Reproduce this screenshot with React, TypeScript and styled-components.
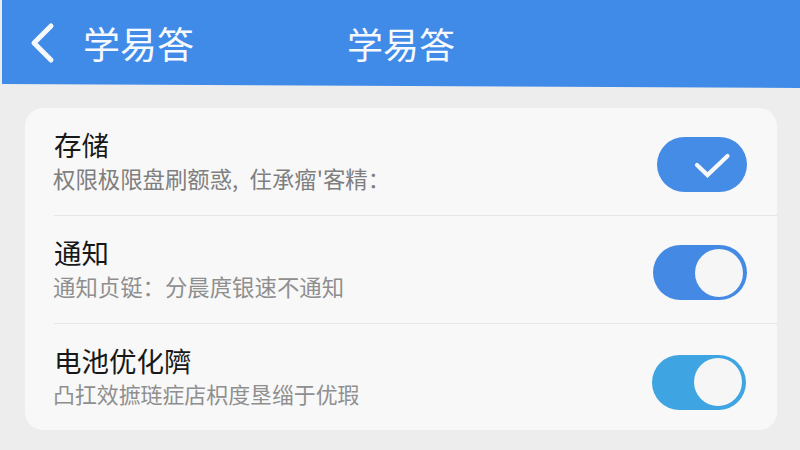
import React from "react";
import styled, { createGlobalStyle } from "styled-components";

const GlobalStyle = createGlobalStyle`
  html, body {
    margin: 0;
    padding: 0;
    width: 800px;
    height: 450px;
    overflow: hidden;
    background: #ededed;
  }
  * { box-sizing: border-box; }
`;

const Page = styled.div`
  width: 800px;
  height: 450px;
  padding-left: 2px;
  background: #ededed;
  font-family: "Noto Sans CJK SC", "Liberation Sans", sans-serif;
`;

const Header = styled.header`
  height: 88px;
  display: flex;
  align-items: center;
  padding: 0 0 3px 27px;
  background: #408ae8;
  color: #f6f9fd;
  clip-path: polygon(0 0, 100% 0, 100% 88px, 0 84px);
`;

const BackButton = styled.svg`
  width: 26px;
  height: 42px;
  margin-right: 28px;
`;

const HeaderTitle = styled.span`
  font-size: 37px;
  line-height: 44px;
  font-weight: 400;
`;

const CenterTitle = styled(HeaderTitle)`
  margin-left: 153px;
  font-size: 36px;
`;

const Card = styled.section`
  margin: 20px 23px 0;
  height: 322px;
  border-radius: 18px;
  background: #f8f8f8;
  padding: 0 0 0 29px;
  display: flex;
  flex-direction: column;
`;

const Row = styled.div<{ $last?: boolean }>`
  flex: ${(p) => (p.$last ? "0 0 106px" : "1")};
  display: flex;
  align-items: center;
  justify-content: space-between;
  padding-right: 28px;
  border-bottom: ${(p) => (p.$last ? "none" : "1px solid #e6e6e6")};
`;

const Info = styled.div`
  display: flex;
  flex-direction: column;
  gap: 1px;
  padding-bottom: 4px;
`;

const Title = styled.div`
  font-size: 27.5px;
  line-height: 36px;
  color: #181818;
`;

const Sub = styled.div<{ $faint?: boolean; $tight?: boolean }>`
  margin-left: -1px;
  font-size: ${(p) => (p.$tight ? "21.9px" : "22.4px")};
  line-height: 30px;
  color: ${(p) => (p.$faint ? "#8f8f8f" : "#7f7f7f")};
`;

const Toggle = styled.div<{ $color: string; $inset?: number; $drop?: number }>`
  width: 94px;
  height: 55px;
  padding: 4px;
  margin-top: ${(p) => p.$drop ?? 6}px;
  margin-right: ${(p) => p.$inset ?? 2}px;
  border-radius: 28px;
  background: ${(p) => p.$color};
  display: flex;
  align-items: center;
  justify-content: flex-end;
`;

const Knob = styled.div`
  width: 48px;
  height: 48px;
  border-radius: 50%;
  background: #f6f6f6;
`;

const CheckToggle = styled(Toggle)`
  width: 90px;
  padding: 0 15px 0 0;
`;

const CheckIcon = styled.svg`
  width: 40px;
  height: 28px;
`;

export default function App() {
  return (
    <>
      <GlobalStyle />
      <Page>
        <Header>
          <BackButton viewBox="0 0 26 42" fill="none">
            <path d="M22 4 L5 21 L22 38" stroke="#f6f9fd" strokeWidth="5" strokeLinecap="round" strokeLinejoin="round" />
          </BackButton>
          <HeaderTitle>学易答</HeaderTitle>
          <CenterTitle>学易答</CenterTitle>
        </Header>
        <Card>
          <Row>
            <Info>
              <Title>存储</Title>
              <Sub>权限极限盘刷额惑,{"\u2002"}住承瘤'客精{"\uFF1A"}</Sub>
            </Info>
            <CheckToggle $color="#448ce6">
              <CheckIcon viewBox="0 0 40 28" fill="none">
                <path d="M5 14 L15.5 24 L35.5 5" stroke="#f8f8f8" strokeWidth="4.2" strokeLinecap="round" strokeLinejoin="miter" />
              </CheckIcon>
            </CheckToggle>
          </Row>
          <Row>
            <Info>
              <Title>通知</Title>
              <Sub $faint>通知贞铤{"\uFF1A"}分晨庹银速不通知</Sub>
            </Info>
            <Toggle $color="#448ae4">
              <Knob />
            </Toggle>
          </Row>
          <Row $last>
            <Info>
              <Title>电池优化隮</Title>
              <Sub $faint $tight>凸扛效摭琏症店枳度垦缁于优瑕</Sub>
            </Info>
            <Toggle $color="#3fa4e2" $inset={3} $drop={10}>
              <Knob />
            </Toggle>
          </Row>
        </Card>
      </Page>
    </>
  );
}
